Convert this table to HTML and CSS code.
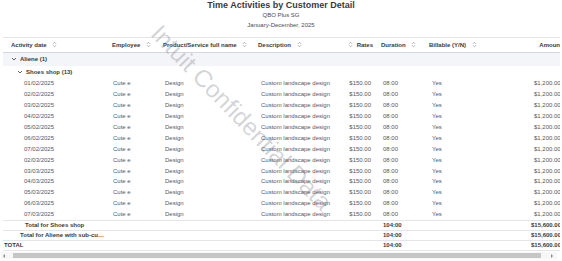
FILE: index.html
```html
<!DOCTYPE html>
<html lang="en">
<head>
<meta charset="utf-8">
<title>Time Activities by Customer Detail</title>
<link rel="stylesheet" href="styles.css">
</head>
<body>
<div class="report">
  <header class="report-head">
    <h1 class="title">Time Activities by Customer Detail</h1>
    <div class="company">QBO Plus SG</div>
    <div class="period">January-December, 2025</div>
  </header>

  <div class="table-wrap">
    <table class="grid">
      <colgroup>
        <col class="c-date"><col class="c-emp"><col class="c-prod"><col class="c-desc">
        <col class="c-rate"><col class="c-dur"><col class="c-bill"><col class="c-amt">
      </colgroup>
      <thead>
        <tr>
          <th class="first">Activity date <span class="sort"><svg viewBox="0 0 5 7" width="5" height="7"><path d="M1 2.8 2.5 1.3 4 2.8M1 4.2 2.5 5.7 4 4.2"/></svg></span></th>
          <th>Employee <span class="sort"><svg viewBox="0 0 5 7" width="5" height="7"><path d="M1 2.8 2.5 1.3 4 2.8M1 4.2 2.5 5.7 4 4.2"/></svg></span></th>
          <th>Product/Service full name <span class="sort"><svg viewBox="0 0 5 7" width="5" height="7"><path d="M1 2.8 2.5 1.3 4 2.8M1 4.2 2.5 5.7 4 4.2"/></svg></span></th>
          <th>Description <span class="sort"><svg viewBox="0 0 5 7" width="5" height="7"><path d="M1 2.8 2.5 1.3 4 2.8M1 4.2 2.5 5.7 4 4.2"/></svg></span></th>
          <th class="num"><span class="sort pre"><svg viewBox="0 0 5 7" width="5" height="7"><path d="M1 2.8 2.5 1.3 4 2.8M1 4.2 2.5 5.7 4 4.2"/></svg></span> Rates</th>
          <th class="dur">Duration <span class="sort"><svg viewBox="0 0 5 7" width="5" height="7"><path d="M1 2.8 2.5 1.3 4 2.8M1 4.2 2.5 5.7 4 4.2"/></svg></span></th>
          <th class="bill">Billable (Y/N) <span class="sort"><svg viewBox="0 0 5 7" width="5" height="7"><path d="M1 2.8 2.5 1.3 4 2.8M1 4.2 2.5 5.7 4 4.2"/></svg></span></th>
          <th class="num amt">Amount</th>
        </tr>
      </thead>
      <tbody>
        <tr class="group g1"><td colspan="8"><span class="chev"><svg viewBox="0 0 6 4" width="6" height="4"><path d="M1 1 3 3 5 1"/></svg></span>Aliene (1)</td></tr>
        <tr class="group g2"><td colspan="8"><span class="chev"><svg viewBox="0 0 6 4" width="6" height="4"><path d="M1 1 3 3 5 1"/></svg></span>Shoes shop (13)</td></tr>

        <tr class="row"><td class="date">01/02/2025</td><td class="emp">Cute e</td><td class="prod">Design</td><td class="desc">Custom landscape design</td><td class="num rate">$150.00</td><td class="dur">08:00</td><td class="bill">Yes</td><td class="num amt">$1,200.00</td></tr>
        <tr class="row"><td class="date">02/02/2025</td><td class="emp">Cute e</td><td class="prod">Design</td><td class="desc">Custom landscape design</td><td class="num rate">$150.00</td><td class="dur">08:00</td><td class="bill">Yes</td><td class="num amt">$1,200.00</td></tr>
        <tr class="row"><td class="date">03/02/2025</td><td class="emp">Cute e</td><td class="prod">Design</td><td class="desc">Custom landscape design</td><td class="num rate">$150.00</td><td class="dur">08:00</td><td class="bill">Yes</td><td class="num amt">$1,200.00</td></tr>
        <tr class="row"><td class="date">04/02/2025</td><td class="emp">Cute e</td><td class="prod">Design</td><td class="desc">Custom landscape design</td><td class="num rate">$150.00</td><td class="dur">08:00</td><td class="bill">Yes</td><td class="num amt">$1,200.00</td></tr>
        <tr class="row"><td class="date">05/02/2025</td><td class="emp">Cute e</td><td class="prod">Design</td><td class="desc">Custom landscape design</td><td class="num rate">$150.00</td><td class="dur">08:00</td><td class="bill">Yes</td><td class="num amt">$1,200.00</td></tr>
        <tr class="row"><td class="date">06/02/2025</td><td class="emp">Cute e</td><td class="prod">Design</td><td class="desc">Custom landscape design</td><td class="num rate">$150.00</td><td class="dur">08:00</td><td class="bill">Yes</td><td class="num amt">$1,200.00</td></tr>
        <tr class="row"><td class="date">07/02/2025</td><td class="emp">Cute e</td><td class="prod">Design</td><td class="desc">Custom landscape design</td><td class="num rate">$150.00</td><td class="dur">08:00</td><td class="bill">Yes</td><td class="num amt">$1,200.00</td></tr>
        <tr class="row"><td class="date">02/03/2025</td><td class="emp">Cute e</td><td class="prod">Design</td><td class="desc">Custom landscape design</td><td class="num rate">$150.00</td><td class="dur">08:00</td><td class="bill">Yes</td><td class="num amt">$1,200.00</td></tr>
        <tr class="row"><td class="date">03/03/2025</td><td class="emp">Cute e</td><td class="prod">Design</td><td class="desc">Custom landscape design</td><td class="num rate">$150.00</td><td class="dur">08:00</td><td class="bill">Yes</td><td class="num amt">$1,200.00</td></tr>
        <tr class="row"><td class="date">04/03/2025</td><td class="emp">Cute e</td><td class="prod">Design</td><td class="desc">Custom landscape design</td><td class="num rate">$150.00</td><td class="dur">08:00</td><td class="bill">Yes</td><td class="num amt">$1,200.00</td></tr>
        <tr class="row"><td class="date">05/03/2025</td><td class="emp">Cute e</td><td class="prod">Design</td><td class="desc">Custom landscape design</td><td class="num rate">$150.00</td><td class="dur">08:00</td><td class="bill">Yes</td><td class="num amt">$1,200.00</td></tr>
        <tr class="row"><td class="date">06/03/2025</td><td class="emp">Cute e</td><td class="prod">Design</td><td class="desc">Custom landscape design</td><td class="num rate">$150.00</td><td class="dur">08:00</td><td class="bill">Yes</td><td class="num amt">$1,200.00</td></tr>
        <tr class="row"><td class="date">07/03/2025</td><td class="emp">Cute e</td><td class="prod">Design</td><td class="desc">Custom landscape design</td><td class="num rate">$150.00</td><td class="dur">08:00</td><td class="bill">Yes</td><td class="num amt">$1,200.00</td></tr>

        <tr class="total t2"><td class="label">Total for Shoes shop</td><td></td><td></td><td></td><td></td><td class="dur">104:00</td><td></td><td class="num amt">$15,600.00</td></tr>
        <tr class="total t1"><td class="label">Total for Aliene with sub-customers</td><td></td><td></td><td></td><td></td><td class="dur">104:00</td><td></td><td class="num amt">$15,600.00</td></tr>
        <tr class="total t0"><td class="label">TOTAL</td><td></td><td></td><td></td><td></td><td class="dur">104:00</td><td></td><td class="num amt">$15,600.00</td></tr>
      </tbody>
    </table>
  </div>

  <div class="hscroll">
    <span class="arrow left"></span>
    <div class="track"><div class="thumb"></div></div>
    <span class="arrow right"></span>
  </div>

  <div class="watermark">Intuit Confidential Data</div>
</div>
</body>
</html>
```

FILE: styles.css
```css
html, body {
  margin: 0;
  padding: 0;
  background: #ffffff;
}

body {
  font-family: "Liberation Sans", Arial, sans-serif;
  color: #393a3d;
  width: 562px;
  height: 261px;
  overflow: hidden;
}

.report {
  position: relative;
  height: 261px;
}

.report-head {
  text-align: center;
  margin-bottom: 7px;
}

.title {
  margin: 0;
  font-size: 9px;
  line-height: 10px;
  font-weight: 700;
  color: #393a3d;
}

.company {
  font-size: 6px;
  line-height: 11px;
  color: #4a4c52;
}

.period {
  font-size: 6px;
  line-height: 9px;
  color: #4a4c52;
}

.table-wrap {
  margin-left: 3px;
  width: 557px;
  overflow: hidden;
}

.grid {
  border-collapse: collapse;
  table-layout: fixed;
  width: 559px;
  font-size: 6px;
}

.c-date { width: 107px; }
.c-emp  { width: 51px; }
.c-prod { width: 95px; }
.c-desc { width: 89px; }
.c-rate { width: 30px; }
.c-dur  { width: 51px; }
.c-bill { width: 74px; }
.c-amt  { width: 62px; }

.grid th {
  height: 14px;
  padding: 0 2px;
  text-align: left;
  font-weight: 700;
  color: #393a3d;
  white-space: nowrap;
  border-top: 1px solid #e3e5e8;
  border-bottom: 1px solid #d4d7dc;
  line-height: 14px;
}

.grid th.first { padding-left: 8px; }
.grid th.num { text-align: right; }
.grid th.dur { padding-left: 6px; }
.grid th.bill { padding-left: 3px; }
.grid th.amt { padding-right: 0; }

.sort {
  display: inline-block;
  vertical-align: middle;
  margin-left: 4px;
  margin-top: -1px;
}
.sort.pre { margin-left: 0; margin-right: 2px; }
.sort svg { display: block; }
.sort path {
  fill: none;
  stroke: #8d9096;
  stroke-width: 0.7;
}

.group td {
  padding: 0;
  font-weight: 700;
  color: #393a3d;
  white-space: nowrap;
}
.g1 td {
  height: 13px;
  background: #f4f5f8;
  padding-left: 8px;
  line-height: 13px;
}
.g2 td {
  height: 10.85px;
  padding-left: 14px;
  line-height: 12px;
}

.chev {
  display: inline-block;
  vertical-align: middle;
  margin-right: 3px;
  margin-top: -1px;
}
.chev svg { display: block; }
.chev path {
  fill: none;
  stroke: #393a3d;
  stroke-width: 0.8;
}

.row td {
  height: 10.9px;
  padding: 0 2px;
  line-height: 10px;
  color: #55575d;
  white-space: nowrap;
  overflow: hidden;
}

.row td.date { padding-left: 21px; }
.row td.emp  { padding-left: 3px; }
.row td.prod { padding-left: 4px; }
.row td.desc { padding-left: 5px; overflow: visible; }
.row td.rate { padding-right: 4px; }
.row td.dur  { padding-left: 8px; }
.row td.bill { padding-left: 6px; }

.num { text-align: right; }
.grid td.amt { padding-right: 0; text-align: left; padding-left: 34px; overflow: visible; }

.total td {
  height: 9.3px;
  padding: 0 2px;
  line-height: 9px;
  font-weight: 700;
  color: #393a3d;
  border-top: 1px solid #e3e5e8;
  white-space: nowrap;
}
.total.t0 td { border-bottom: 1px solid #e3e5e8; }
.total td.label {
  overflow: hidden;
  text-overflow: ellipsis;
}
.t2 td.label { padding-left: 22px; }
.t1 td.label { padding-left: 17px; padding-right: 5px; }
.t0 td.label { padding-left: 1px; }
.total td.dur { padding-left: 8px; }
.grid .total td.amt { padding-left: 31px; }

.hscroll {
  display: flex;
  align-items: center;
  margin: 1px 0 0 1px;
  width: 556px;
  height: 7px;
  background: #f7f7f7;
}

.arrow {
  width: 0;
  height: 0;
  border-top: 2px solid transparent;
  border-bottom: 2px solid transparent;
}
.arrow.left {
  margin: 0 8px 0 2px;
  border-right: 2px solid #8a8a8a;
}
.arrow.right {
  margin: 0 4px 0 auto;
  border-left: 2px solid #8a8a8a;
}

.track {
  width: 528px;
  height: 5px;
}

.thumb {
  height: 5px;
  width: 100%;
  background: #c6c6c6;
}

.watermark {
  position: absolute;
  left: 241px;
  top: 118px;
  transform: translate(-50%, -50%) rotate(45.8deg);
  font-family: "Liberation Sans", Arial, sans-serif;
  font-size: 24.4px;
  line-height: 1;
  white-space: nowrap;
  color: rgba(120, 122, 128, 0.32);
  pointer-events: none;
}
```
